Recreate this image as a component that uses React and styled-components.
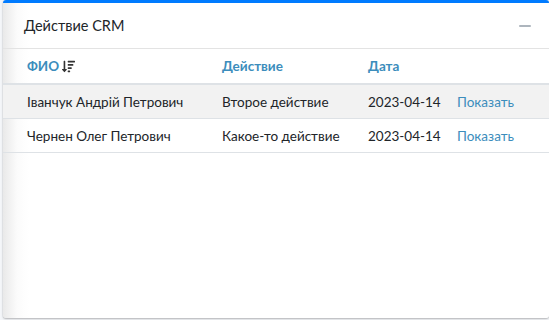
import React from 'react';
import styled, { createGlobalStyle } from 'styled-components';
import { FaSortAmountDown } from 'react-icons/fa';

const Global = createGlobalStyle`
  html, body { margin: 0; padding: 0; background: #f4f6f9; }
  body { font-family: Lato, "Noto Sans", "Liberation Sans", sans-serif; color: #212529; }
`;

const Page = styled.div`
  width: 549px;
  height: 320px;
  padding: 0 0 2px 3px;
  box-sizing: border-box;
  display: flex;
`;

const Card = styled.div`
  flex: 1;
  display: flex;
  flex-direction: column;
  border-top: 3px solid #007bff;
  border-radius: 3px;
  background: linear-gradient(to right, #e9e9e9 0, #fbfbfb 14px, #fff 26px);
  box-shadow: 0 0 1px rgba(0, 0, 0, 0.2), 0 1px 2px rgba(0, 0, 0, 0.25);
`;

const Header = styled.div`
  height: 45px;
  display: flex;
  align-items: center;
  justify-content: space-between;
  padding: 0 18px 0 21px;
  border-bottom: 1px solid #e3e3e3;
`;

const Title = styled.h3`
  margin: 0;
  font-size: 14.5px;
  font-weight: 400;
  color: #212529;
`;

const Collapse = styled.span`
  width: 12px;
  height: 2px;
  background: #adb5bd;
  border-radius: 1px;
`;

const Table = styled.table`
  width: 100%;
  table-layout: fixed;
  border-collapse: collapse;
  font-size: 13.5px;
`;

const Th = styled.th`
  text-align: left;
  height: 34px;
  padding: 0 12px;
  padding-left: ${p => (p.$first ? '24px' : '12px')};
  width: ${p => p.$w || 'auto'};
  color: #3c8dbc;
  font-weight: 700;
  border-bottom: 2px solid #dee2e6;
  white-space: nowrap;
`;

const SortIcon = styled(FaSortAmountDown)`
  font-size: 13px;
  color: #333;
  margin-left: 3px;
  vertical-align: -2px;
`;

const Row = styled.tr`
  background: ${p => (p.$striped ? '#f2f2f2' : 'transparent')};
  border-bottom: 1px solid #dee2e6;
`;

const Td = styled.td`
  height: 33px;
  padding: 0 12px;
  padding-left: ${p => (p.$first ? '24px' : '12px')};
  white-space: nowrap;
`;

const ShowLink = styled.a`
  color: #3c8dbc;
  text-decoration: none;
  cursor: pointer;
`;

const rows = [
  { id: 1, name: 'Іванчук Андрій Петрович', action: 'Второе действие', date: '2023-04-14' },
  { id: 2, name: 'Чернен Олег Петрович', action: 'Какое-то действие', date: '2023-04-14' },
];

export default function App() {
  return (
    <Page>
      <Global />
      <Card>
        <Header>
          <Title>Действие CRM</Title>
          <Collapse />
        </Header>
        <Table>
          <thead>
            <tr>
              <Th $first $w="171px">ФИО<SortIcon /></Th>
              <Th $w="122px">Действие</Th>
              <Th $w="65px">Дата</Th>
              <Th />
            </tr>
          </thead>
          <tbody>
            {rows.map((r, i) => (
              <Row key={r.id} $striped={i % 2 === 0}>
                <Td $first>{r.name}</Td>
                <Td>{r.action}</Td>
                <Td>{r.date}</Td>
                <Td><ShowLink>Показать</ShowLink></Td>
              </Row>
            ))}
          </tbody>
        </Table>
      </Card>
    </Page>
  );
}
